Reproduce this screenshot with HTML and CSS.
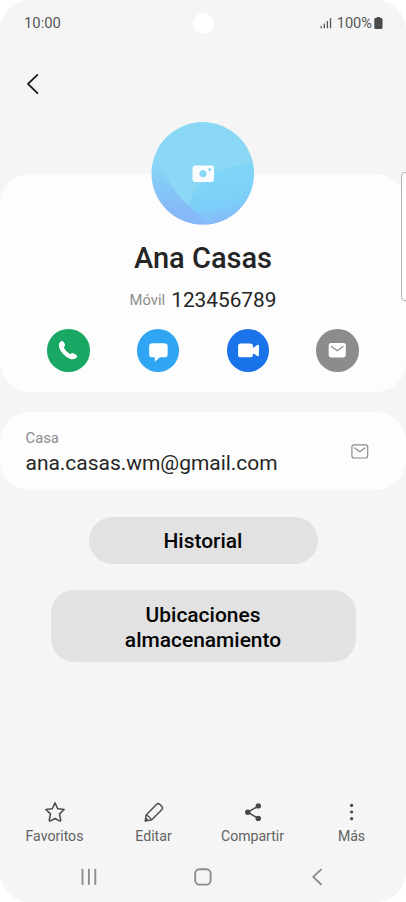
FILE: index.html
```html
<!DOCTYPE html>
<html lang="es">
<head>
<meta charset="utf-8">
<title>Ana Casas</title>
<link rel="stylesheet" href="styles.css">
</head>
<body>
<main class="phone">
  <header class="status">
    <span class="clock">10:00</span>
    <span class="camera"></span>
    <span class="indicators">
      <svg class="signal" width="12" height="12" viewBox="0 0 12 12"><path d="M1.2 9v2.3M4.3 6.6v4.7M7.4 4v7.3M10.5 1v10.3" stroke="#555" stroke-width="1.3"/></svg>
      <span class="percent">100%</span>
      <svg class="battery" width="9" height="12" viewBox="0 0 9 12"><path d="M2.7 0h3.4v1H7.5Q8.5 1.3 8.5 2.5V10.500Q8.500 12 7.200 12H1.700Q.3 12 .3 10.500V2.500Q.3 1.300 1.400 1H2.700z" fill="#4b4b4b"/></svg>
    </span>
  </header>
  <nav class="topbar">
    <svg width="14" height="22" viewBox="0 0 14 22"><path d="M11.400 1.800 2 10.900l9.400 9.200" fill="none" stroke="#111" stroke-width="1.700" stroke-linecap="round" stroke-linejoin="round"/></svg>
  </nav>

  <section class="card profile">
    <svg class="avatar" width="104" height="103" viewBox="0 0 104 103">
      <defs>
        <clipPath id="disc"><circle cx="51.700" cy="51.500" r="51.200"/></clipPath>
        <linearGradient id="base" x1=".55" y1="0" x2=".45" y2="1"><stop offset=".4" stop-color="#8bd8f5"/><stop offset=".62" stop-color="#84cbf7"/><stop offset=".88" stop-color="#86b9f7"/></linearGradient>
        <linearGradient id="wave" gradientUnits="userSpaceOnUse" x1="62" y1="45" x2="74" y2="103"><stop offset=".2" stop-color="#7fd5f7"/><stop offset=".65" stop-color="#7ccef8"/><stop offset="1" stop-color="#8bb4fa"/></linearGradient>
      </defs>
      <g clip-path="url(#disc)">
        <path fill="url(#base)" d="M0 0h104v103H0z"/>
        <path fill="#8bd8f6" d="M7 35Q16 64 38 84Q43 63 61 53Q81 42 104 42V0H0z"/>
        <path fill="url(#wave)" d="M104 42Q78 43 61 53Q43 63 38 84Q49 94 58 103h46z"/>
      </g>
      <path fill="#fcfdfe" fill-rule="evenodd" d="M44.500 43.500H60Q63 43.500 63 46.500V57Q63 60 60 60H44.500Q41.500 60 41.500 57V46.500Q41.500 43.500 44.500 43.500M52 47.900a3.700 3.700 0 1 0 .01 0M58.700 45.900a1.500 1.500 0 1 0 .01 0"/>
    </svg>
    <h1 class="name">Ana Casas</h1>
    <p class="phone-line"><span class="kind">Móvil</span><span class="number">123456789</span></p>
    <div class="actions">
      <span class="action call"><svg width="43" height="43" viewBox="0 0 43 43"><path fill="#fff" d="M13.400 13Q15.200 11.200 16.700 13L18.100 15.300Q18.800 16.700 17.500 18L16.900 18.700Q18.900 22.600 23.300 25.600L24.400 24.700Q25.500 23.800 26.800 24.500L29.700 26.200Q31.200 27.400 29.900 28.900Q28 31.300 24.500 30.500C18.500 28.700 13.600 23.600 12.100 18Q11.500 14.800 13.400 13z"/></svg></span>
      <span class="action message"><svg width="43" height="43" viewBox="0 0 43 43"><path fill="#fff" d="M15.500 14.500h12Q31 14.500 31 17.500v8.300q0 2.900-3.500 2.900H23.300L18 33.200v-4.500H15.500Q12.300 28.700 12.300 25.800V17.500Q12.300 14.500 15.500 14.500"/></svg></span>
      <span class="action video"><svg width="43" height="43" viewBox="0 0 43 43"><path fill="#fff" d="M14 14.700H23.300Q26.300 14.700 26.300 17.500V19.100L31 16Q32.300 15.500 32.300 17V26.500Q32.300 28 31 27.500L26.300 24.500V25.800Q26.300 28.700 23.300 28.700H14Q11.200 28.700 11.200 25.800V17.500Q11.200 14.700 14 14.700"/></svg></span>
      <span class="action mail"><svg width="43" height="43" viewBox="0 0 43 43"><rect x="12.800" y="14.100" width="17.400" height="14.700" rx="2.400" fill="#fff"/><path d="m15.700 17.700 5.800 4.300 5.800-4.300" fill="none" stroke="#8c8c8c" stroke-width="1.300" stroke-linecap="round" stroke-linejoin="round"/></svg></span>
    </div>
  </section>

  <section class="card email">
    <div class="email-text">
      <span class="kind">Casa</span>
      <span class="address">ana.casas.wm@gmail.com</span>
    </div>
    <svg width="18" height="15" viewBox="0 0 18 15"><rect x=".9" y=".8" width="15.800" height="13.200" rx="2.200" fill="none" stroke="#8c8c8c" stroke-width="1.200"/><path d="m3.700 3.900 5.100 3.800 5.100-3.800" fill="none" stroke="#8c8c8c" stroke-width="1.200" stroke-linecap="round" stroke-linejoin="round"/></svg>
  </section>

  <button class="pill history">Historial</button>
  <button class="pill storage">Ubicaciones<br>almacenamiento</button>

  <nav class="tabs">
    <span class="tab"><svg width="24" height="24" viewBox="0 0 24 24"><path d="M12 2.900 14.700 8.700 21.200 9.500 16.500 13.900 17.700 20Q17.800 21.400 16.500 20.900L12 18.500 7.500 20.900Q6.200 21.400 6.300 20L7.500 13.900 2.800 9.500 9.300 8.700z" fill="none" stroke="#484848" stroke-width="1.500" stroke-linejoin="round"/></svg>Favoritos</span>
    <span class="tab"><svg width="24" height="24" viewBox="0 0 24 24"><path d="M3.200 21.100 4.100 14.900 14.700 4.200Q16 2.900 17.400 4.100L20 6.600Q21.200 8 20 9.400L9.500 19.900zM4.100 14.900Q7.500 16.300 9.500 19.900" fill="none" stroke="#484848" stroke-width="1.400" stroke-linejoin="round"/><path d="m3.100 21.200 .6-4 3.300 3.300z" fill="#484848"/></svg>Editar</span>
    <span class="tab"><svg width="24" height="24" viewBox="0 0 24 24"><path d="M17.300 6 6.800 12.200l10.500 6.200" fill="none" stroke="#484848" stroke-width="1.500"/><g fill="#484848"><circle cx="17.300" cy="5.900" r="2.700"/><circle cx="6.800" cy="12.200" r="2.700"/><circle cx="17.300" cy="18.400" r="2.700"/></g></svg>Compartir</span>
    <span class="tab"><svg width="24" height="24" viewBox="0 0 24 24"><g fill="#484848"><circle cx="11.600" cy="5.400" r="1.600"/><circle cx="11.600" cy="12" r="1.600"/><circle cx="11.600" cy="18.700" r="1.600"/></g></svg>Más</span>
  </nav>
  <footer class="system">
    <svg width="20" height="20" viewBox="0 0 20 20"><path d="M3.500 2.600v14.500M9.900 2.600v14.500M16.300 2.600v14.500" stroke="#8c8c8c" stroke-width="1.900" stroke-linecap="round"/></svg>
    <svg width="20" height="20" viewBox="0 0 20 20"><rect x="2.200" y="2.200" width="15.400" height="15.400" rx="4.300" fill="none" stroke="#8c8c8c" stroke-width="1.900"/></svg>
    <svg width="20" height="20" viewBox="0 0 20 20"><path d="m14 2.600-7.800 7.300L14 17.200" fill="none" stroke="#8c8c8c" stroke-width="1.900" stroke-linecap="round" stroke-linejoin="round"/></svg>
  </footer>
  <span class="edge-handle"></span>
</main>
</body>
</html>
```
FILE: styles.css
```css
* { box-sizing: border-box; }
body { margin: 0; background: #fff; font-family: Roboto, sans-serif; }
svg { display: block; flex: none; }
.phone {
  position: relative;
  width: 406px;
  height: 902px;
  overflow: hidden;
  border-radius: 30px;
  background: #f5f5f5;
  display: flex;
  flex-direction: column;
  align-items: center;
}
.status {
  width: 100%;
  height: 46px;
  padding: 0 23px 0 24px;
  display: grid;
  grid-template-columns: 1fr 21px 1fr;
  align-items: center;
  color: #555;
  font-size: 14.8px;
}
.camera { width: 21px; height: 21px; border-radius: 50%; background: #fff; }
.indicators { display: flex; justify-content: flex-end; align-items: center; }
.percent { margin: 0 2px 0 5px; font-size: 14.6px; }
.topbar { width: 100%; height: 128px; padding: 27px 26px; }
.card { width: 100%; background: #fdfdfd; border-radius: 30px; flex: none; }
.profile {
  height: 218px;
  display: flex;
  flex-direction: column;
  align-items: center;
}
.avatar { margin-top: -52px; }
.name {
  margin: 15px 0 0;
  font-size: 29px;
  font-weight: 500;
  line-height: 36px;
  color: #252525;
}
.phone-line {
  margin: 10px 0 0;
  height: 28px;
  display: flex;
  align-items: center;
  gap: 6px;
  line-height: 28px;
}
.kind { font-size: 14.8px; color: #8c8c8c; }
.number { font-size: 20.8px; color: #252525; }
.actions {
  width: 312px;
  margin-top: 15px;
  display: flex;
  justify-content: space-between;
}
.action { width: 42.500px; height: 42.500px; border-radius: 50%; }
.action svg { width: 100%; height: 100%; }
.call { background: #18a864; }
.message { background: #30a5f3; }
.video { background: #1a73e8; }
.mail { background: #8c8c8c; }
.email {
  height: 78px;
  margin-top: 20.400px;
  padding: 0 37px 0 25.500px;
  display: flex;
  align-items: center;
  justify-content: space-between;
}
.email-text { display: flex; flex-direction: column; padding-top: 3px; }
.email-text .kind { line-height: 20px; }
.address { font-size: 20.950px; line-height: 30px; color: #252525; }
.pill {
  flex: none;
  padding: 0;
  border: 0;
  background: #e2e2e2;
  color: #050505;
  font: 500 20.950px/25px Roboto, sans-serif;
}
.history { width: 229px; height: 47px; margin-top: 26.500px; border-radius: 23.500px; padding-top: 3px; }
.storage { width: 305px; height: 72px; margin-top: 26.500px; border-radius: 23px; padding-top: 3px; }
.tabs {
  width: 396px;
  margin: auto 0 0;
  display: grid;
  grid-template-columns: repeat(4, 1fr);
}
.tab {
  display: flex;
  flex-direction: column;
  align-items: center;
  gap: 2px;
  font-size: 14.100px;
  line-height: 20px;
  color: #626262;
}
.system {
  width: 248px;
  height: 56px;
  padding-top: 21px;
  display: flex;
  justify-content: space-between;
  align-items: flex-start;
}
.edge-handle {
  position: absolute;
  left: 401px;
  top: 172px;
  width: 12px;
  height: 129px;
  border: 1px solid #b5b5b5;
  border-radius: 4px;
  background: rgba(255, 255, 255, .6);
}
```
